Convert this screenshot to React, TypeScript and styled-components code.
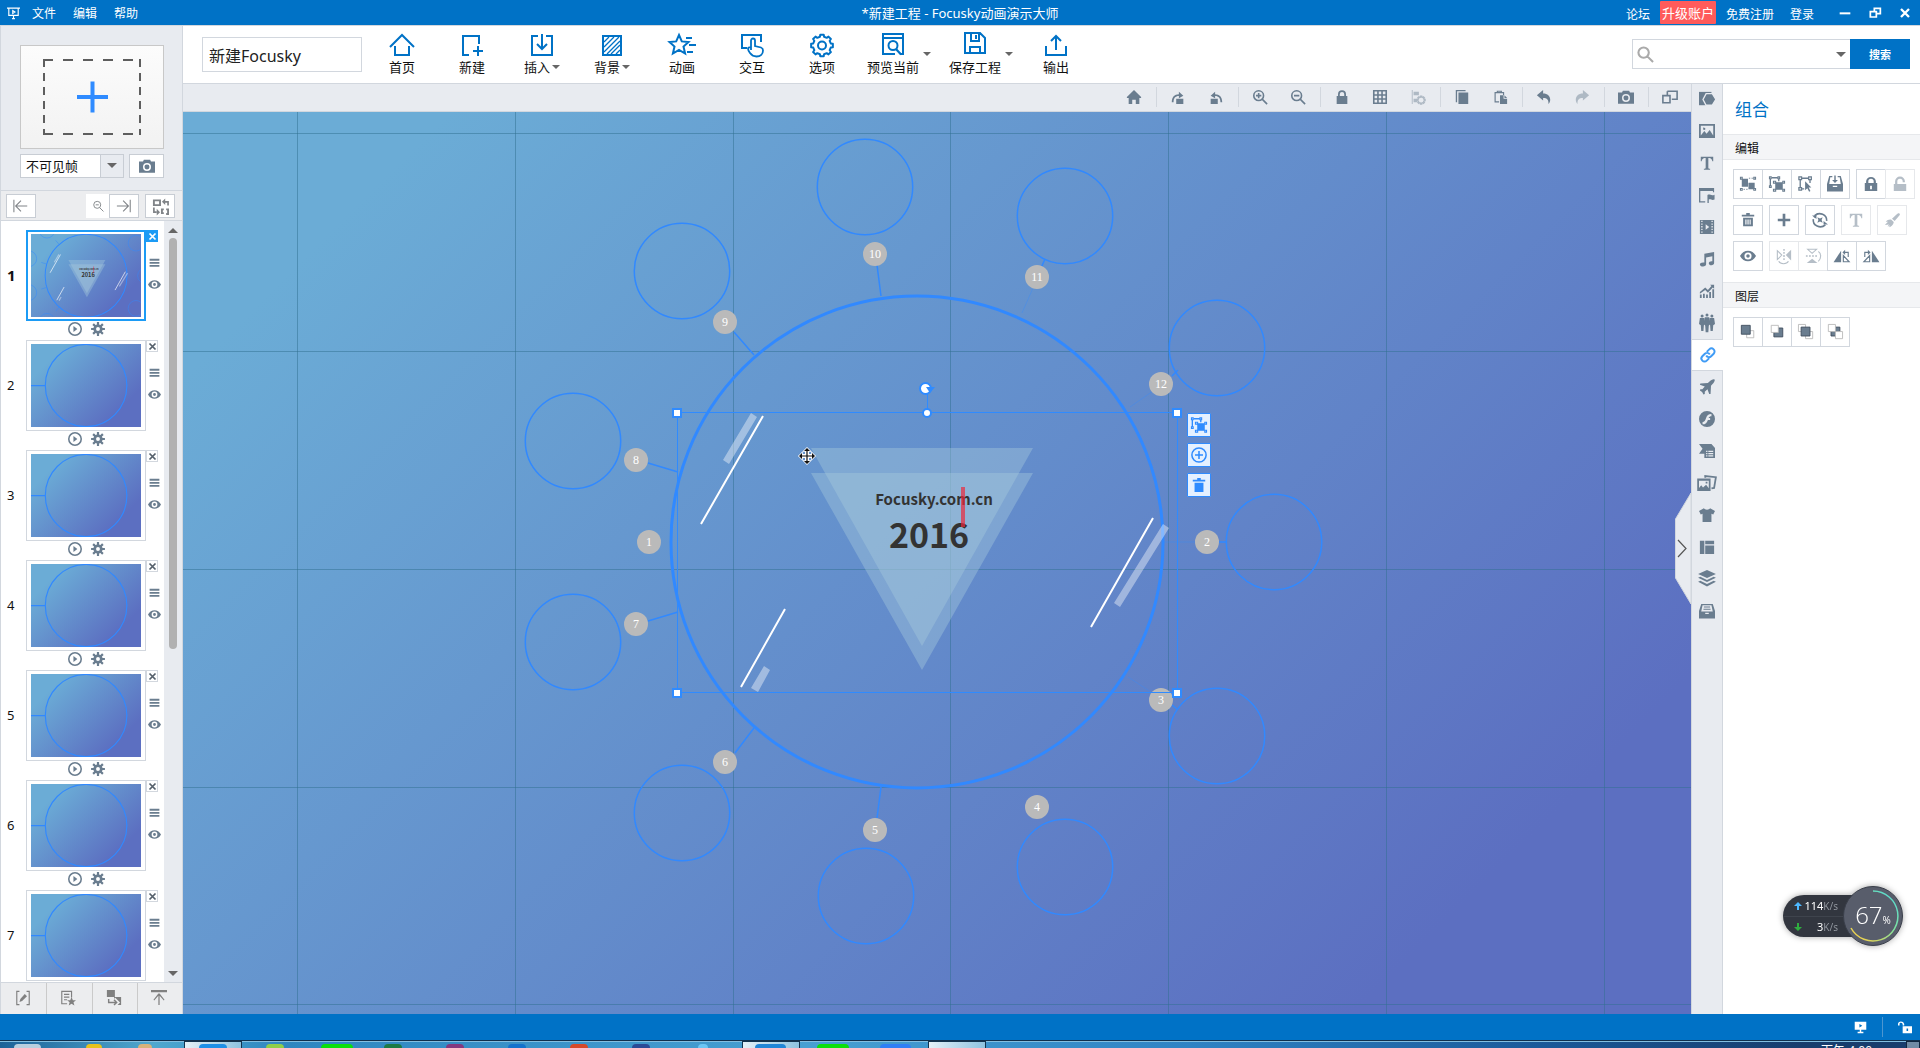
import React from "react";
import styled, { createGlobalStyle } from "styled-components";

const c = {
  blue: "#0072c6",
  line: "#d2d7de",
  panel: "#e8ebf0",
  slate: "#6a7d8f",
  accent: "#2f8bff",
};

const Global = createGlobalStyle`
  * { box-sizing: border-box; }
  body {
    margin: 0;
    font-family: "Noto Sans", "Noto Sans CJK SC", sans-serif;
    font-size: 12px;
    color: #111;
  }
  button { font: inherit; color: inherit; padding: 0; margin: 0; border: 0; background: none; cursor: pointer; }
  svg { display: block; flex: none; }
`;

/* ---------- icons ---------- */

const gear = (teeth: number, outer: number, inner: number, cx: number, cy: number) => {
  const pts: string[] = [];
  const step = (Math.PI * 2) / teeth;
  for (let i = 0; i < teeth; i++) {
    const a = i * step - Math.PI / 2;
    [[-0.3, inner], [-0.2, outer], [0.2, outer], [0.3, inner]].forEach(([k, r]) => {
      pts.push(`${(cx + Math.cos(a + k * step) * r).toFixed(2)} ${(cy + Math.sin(a + k * step) * r).toFixed(2)}`);
    });
  }
  return `M${pts.join("L")}Z`;
};

const line = { fill: "none", stroke: "currentColor" } as const;

/* Ribbon icons, drawn on a 26 unit square */
const ribbon: Record<string, React.ReactNode> = {
  home: <path {...line} strokeWidth="2" d="M1 15 13 3l12 12M6 14v9h14v-9" />,
  add: <path {...line} strokeWidth="2" d="M10 23H4V4h16v8M14 19h10M19 14v10" />,
  insert: <path {...line} strokeWidth="2" d="M9 4H3v19h20V4h-6M13 2v15M8 12l5 5 5-5" />,
  background: (
    <>
      <path {...line} strokeWidth="2" d="M4 4h18v19H4z" />
      <path {...line} strokeWidth="1.3" d="M5 10l5-5M5 15 15 5M5 20 20 5M8 22 21 9M12 22l9-9M17 22l4-4" />
    </>
  ),
  animate: (
    <path {...line} strokeWidth="2" d="M10 3l2.8 6.400 6.700.600-5 4.500 1.600 7L10 18l-6.100 3.500 1.600-7-5-4.500 6.700-.600zM17 6h6M20 13h7M18 20h6" />
  ),
  interact: (
    <>
      <path {...line} strokeWidth="2" d="M8 16H3V3h19v7" />
      <path {...line} strokeWidth="1.800" d="M12 18V8.500a2 2 0 0 1 4 0V14l6 1.500c1.500.500 2 1.500 2 3 0 3.500-2.500 6-6.500 6-3.500 0-5-1.500-6.500-3.500-1.500-2-2-3-2-4.500 0-1.200 1.800-1.500 3-.500" />
    </>
  ),
  options: (
    <>
      <path {...line} strokeWidth="2" strokeLinejoin="round" d={gear(8, 11, 9, 13, 13.500)} />
      <circle {...line} strokeWidth="2" cx="13" cy="13.500" r="4" />
    </>
  ),
  preview: (
    <>
      <path {...line} strokeWidth="2" d="M15 22H3V2h20v20h-3M3 6h20" />
      <circle {...line} strokeWidth="2" cx="13" cy="13.500" r="4.500" />
      <path {...line} strokeWidth="2.200" d="M16 17l5 5.500" />
    </>
  ),
  save: <path {...line} strokeWidth="2" d="M3 1h15l5 5v15H3zM9 1v8h8V1M14 3v4M8 21v-6h10v6" />,
  output: <path {...line} strokeWidth="2" d="M3 14v9h20v-9M13 18V4M8 9l5-5 5 5" />,
};

/* Tool icons, drawn on an 18 unit square */
const tools: Record<string, React.ReactNode> = {
  house: <path d="M9 1l8 8v1h-2v7h-4v-5H7v5H3v-7H1V9z" />,
  rotateRight: <path d="M7 11h8v6H7zM2 15c0-6 3-9 8-9V3l5 4.500-5 3V8c-4 0-6 2.500-6 7z" />,
  rotateLeft: <path d="M3 11h8v6H3zM16 15c0-6-3-9-8-9V3L3 7.500l5 3V8c4 0 6 2.500 6 7z" />,
  zoomIn: <path {...line} strokeWidth="1.800" d="M7.500 2a5.500 5.500 0 1 0 0 11 5.500 5.500 0 0 0 0-11zM12 12l5 5M4.500 7.500h6M7.500 4.500v6" />,
  zoomOut: <path {...line} strokeWidth="1.800" d="M7.500 2a5.500 5.500 0 1 0 0 11 5.500 5.500 0 0 0 0-11zM12 12l5 5M4.500 7.500h6" />,
  lock: (
    <path fillRule="evenodd" d="M3 8h1.500V6a4.500 4.500 0 0 1 9 0v2H15v9H3zM6.500 8h5V6a2.500 2.500 0 0 0-5 0z" />
  ),
  lockHole: (
    <path fillRule="evenodd" d="M2 8h1.500V6a5.500 5 0 0 1 11 0v2H16v9H2zM6 8h6V6a3 3 0 0 0-6 0zM8 11v4h2v-4z" />
  ),
  unlock: <path d="M2 9h14v8H2zM3.500 9V6a5 5 0 0 1 11 0v1h-2.500V6a3 3 0 0 0-6 0v3z" />,
  grid: <path {...line} strokeWidth="1.800" d="M2 2h14v14H2zM2 6.700h14M2 11.300h14M6.700 2v14M11.300 2v14" />,
  align: (
    <>
      <path d="M2 1h1v16H2zM4 3h6v4H4zM4 11h4v4H4z" />
      <path {...line} strokeWidth="1.500" d={gear(8, 4.500, 3.400, 12.500, 12.500)} />
    </>
  ),
  copy: <path d="M2 1h11v1.500H3.500V15H2zM5 4h11v13H5z" />,
  paste: (
    <>
      <path {...line} strokeWidth="1.300" d="M8 14.500H3.500V4H13v3M6 4V2.500h4.500V4" />
      <path d="M9 7h4v4h4v6H9zM14 7l3 3h-3z" />
    </>
  ),
  undo: <path d="M1 7l7-6v4c5 0 8 3 8 7 0 2-1 4-2 5 .5-5-1.500-7-6-7v3z" />,
  redo: <path d="M17 7l-7-6v4c-5 0-8 3-8 7 0 2 1 4 2 5-.5-5 1.500-7 6-7v3z" />,
  camera: (
    <path fillRule="evenodd" d="M0 4h4.500l1-2h7l1 2H18v12.500H0zM9 5.500a4.500 4.500 0 1 0 0 9 4.500 4.500 0 0 0 0-9zm0 1.700a2.800 2.800 0 1 1 0 5.600 2.800 2.800 0 0 1 0-5.600z" />
  ),
  windows: <path {...line} strokeWidth="1.800" d="M6 2.500h11v9h-6M6 2.500V7M1 7.500h8v8H1z" />,
  shape: (
    <>
      <path d="M0 1h14v15H0z" />
      <path stroke={c.panel} strokeWidth="1.500" d="M8 3h7l4 6.500-4 6.500H8L4.500 9.500z" />
    </>
  ),
  image: <path fillRule="evenodd" d="M0 1h18v16H0zM2 3v11l4-5 2.500 3L12 8l4 6V3zM4.500 5l2.500.5v2L5 8z" />,
  textT: <path d="M2 2h14v5h-1c-.5-2-1.500-3.500-3.500-3.500h-1V14c0 1.200.5 1.500 2 1.500v1H5.500v-1c1.500 0 2-.3 2-1.500V3.500h-1C4.500 3.500 3.500 5 3 7H2z" />,
  flagWindow: <path d="M0 1h17v5h-1.300V4.500H1.500V16H7v1.500H0zM9.500 9c3-1.500 4 1.500 8-.3V14c-3 1.500-4-.8-6.500 0v4H9.500z" />,
  film: (
    <path fillRule="evenodd" d="M1 1h16v16H1zM2.500 2v1.500H4V2zm0 3v1.500H4V5zm0 3v1.500H4V8zm0 3v1.500H4V11zm0 3v1.500H4V14zM14 2v1.500h1.500V2zm0 3v1.500h1.500V5zm0 3v1.500h1.500V8zm0 3v1.500h1.500V11zm0 3v1.500h1.500V14zM7.500 6v6l4-3z" />
  ),
  music: <path d="M6 3l11-2v12.500c0 1.500-1.300 2.500-3 2.500s-3-1-3-2.300c0-1.500 1.800-2.500 4-2.200V6L8 7.300V15c0 1.500-1.500 2.500-3.500 2.500S1 16.500 1 15.200c0-1.600 2-2.700 5-2.200z" />,
  chart: (
    <path d="M1 13h2v4H1zM4.500 12h2v5h-2zM8 13h2v4H8zM11.500 10h2v7h-2zM15 7h2v10h-2zM1 10l6-5 3 3 4-4.500-1.500-1.500H17v4.500l-1.500-1.500L10 11 7 8l-6 4z" />
  ),
  people: (
    <>
      <circle cx="3.500" cy="1" r="1.700" />
      <circle cx="9" cy="0" r="1.700" />
      <circle cx="14.500" cy="1" r="1.700" />
      <path d="M1 3.500h5l.5 7-1 1-.5 6.500H2.500L2 11.500 0 10zM6.500 2.500h5l.5 8-1 1.500-.5 7.500h-3L7 12l-1-1.500zM12 3.500h5l1 6.500-2 1.500-.5 6.500H13l-.5-6.500-1-1z" />
    </>
  ),
  link: (
    <g transform="rotate(-45 9 9)">
      <path {...line} strokeWidth="2.200" d="M7.500 12.500H3.500a3.500 3.500 0 0 1 0-7h4a3.500 3.500 0 0 1 3.300 4.500M10.500 5.500h4a3.500 3.500 0 0 1 0 7h-4a3.500 3.500 0 0 1-3.300-4.500" />
    </g>
  ),
  plane: <path d="M17.500.5c.8 1-.5 3.500-2.500 5.500l-1.500 1.500L13 17l-1.500 0-2-5.500-3 2.800V17l-1.500.5L3.500 14.500 1 13l.5-1.500h2.300l2.700-3L1 6.500 1.500 5l8.500-.500L11.500 3c2-2 5-3.500 6-2.500z" />,
  flash: (
    <path fillRule="evenodd" d="M9 0a9 9 0 1 1 0 18A9 9 0 0 1 9 0zm5 3.500c-3.500 0-5 1.500-6 4.500-1 3-2 4.500-4 4.500V15c3.500 0 5-2 6-5h2.500V7.800h-1.700c.6-1.300 1.500-2 3.200-2z" />
  ),
  template: (
    <>
      <path d="M0 1h14l4 4.500V17H6v-5H0l4-5.500z" />
      <path stroke={c.panel} strokeWidth="1.300" d="M8 9.500h1.500M10.500 9.500H16M8 12h1.500M10.500 12H16M8 14.500h1.500M10.500 14.500H16" />
    </>
  ),
  album: (
    <>
      <path fillRule="evenodd" d="M-2 4h15v14H-2zM0 6.500v8l2.500-3 2 2.500L8 11l3 4V6.500zM7.500 7.500h2v2h-2z" />
      <path {...line} strokeWidth="2" d="M7 3V1.200L19 2.500l-2 12-3 .5" />
    </>
  ),
  shirt: <path d="M5.500 1.500c1 2 6 2 7 0L18 4.500 16 8.500l-2-1V17H4V7.500l-2 1L0 4.500z" />,
  layout: <path d="M1 2h5v15H1zM7 2h10v4H7zM7 7.300h10V17H7z" />,
  stack: <path d="M9-1l10 4.500L9 8-1 3.500zM1.500 6.500L9 10l7.500-3.500L19 7.500 9 12.500-1 7.500zM1.500 11L9 14.500 16.500 11l2.500 1-10 5.500L-1 12z" />,
  drawer: (
    <path fillRule="evenodd" d="M2.500 1h13L18 9v8.500H0V9zM4 2.500L2.500 9.500h13L14 2.500zM5.500 4h7v1.200h-7zM5 6.500h8v1.200H5zM7 11v1.300h4V11z" />
  ),
  groupIn: (
    <>
      <path d="M2 3h7v9H2zM9.500 7.500h7V15h-7z" />
      <path {...line} strokeWidth="1.200" d="M.5 1.500h2v2h-2zM15.500 1.500h2v2h-2zM.5 14h2v2h-2zM15.500 14h2v2h-2z" />
      <path {...line} strokeWidth="1" strokeDasharray="1.500 1.500" d="M10 2.500h5M4 15h5" />
    </>
  ),
  group: (
    <>
      <path d="M7 7h8.500v8.500H7z" />
      <path {...line} strokeWidth="1.500" d="M3 2h7M1.500 3.500v8M11 3.500V6" />
      <path {...line} strokeWidth="1.200" d="M.5 1h2v2h-2zM10 1h2v2h-2zM.5 11h2v2h-2zM5 6h2.500v2H5zM15.500 6h2v2h-2zM5 15h2.500v2H5zM15.500 15h2v2h-2z" />
    </>
  ),
  pick: (
    <>
      <path {...line} strokeWidth="1.500" d="M4 2.500h8M2.500 4v9M13.500 4v4M4 14.500h3" />
      <path {...line} strokeWidth="1.400" d="M1 1h3v3H1zM12 1h3v3h-3zM1 13h3v3H1z" />
      <path d="M8 6l7 7h-3l2 4-1.500.8-2-4L8 16z" />
    </>
  ),
  import: (
    <path fillRule="evenodd" d="M2.500 0H6v1.500H3.700L2.500 9h13l-1.200-7.500H12V0h3.500L18 9v8.500H0V9zM8.200-.5h1.600v5h2.500L9 8 5.700 4.500h2.500zM6.500 11v1.300h5V11z" />
  ),
  trash: <path fillRule="evenodd" d="M7 1h4v2h5v2H2V3h5zM3.500 6.500h11V16h-11zM6 8.500V14h1.300V8.500zm2.400 0V14h1.300V8.500zm2.400 0V14H12V8.500z" />,
  bin: <path d="M7 1h4v2h5v2H2V3h5zM4 6.500h10V17H4z" />,
  plus: <path d="M7.500 2h3v5.500H16v3h-5.500V16h-3v-5.500H2v-3h5.500z" />,
  spin: (
    <>
      <path {...line} strokeWidth="1.800" d="M3 4a8 7.500 0 0 1 13.500 6M15 14.500A8 7.500 0 0 1 1.500 8M6.500 2a8 8 0 0 0-4 4" />
      <path d="M0 4h5v4zM18 14h-5v-4zM6 6l3 1.200L12 6l-1.200 3 1.200 3-3-1.200L6 12l1.200-3z" />
    </>
  ),
  brush: <path d="M17 1l1 2-6 7-3-2.500L15 2zM8 8.500l3 2.700c-.3 3-3 5.500-5.500 6L7 15l-3 1.500L5.500 14 1 14.500 4.500 11 2 11c1.500-2 4-3 6-2.500z" />,
  eye: (
    <path fillRule="evenodd" d="M0 9c4-8 14-8 18 0-4 8-14 8-18 0zm9-4a4 4 0 1 0 0 8 4 4 0 0 0 0-8zm0 2a2 2 0 1 1 0 4 2 2 0 0 1 0-4z" />
  ),
  flipH: (
    <>
      <path d="M17 2v12l-6-6z" />
      <path {...line} strokeWidth="1.200" d="M1.500 3v10l5-5zM3 15c2 3.500 9 3.500 11 0" />
      <path {...line} strokeWidth="1.600" strokeDasharray="2 1.500" d="M9 1v13" />
    </>
  ),
  flipV: (
    <>
      <path d="M2 17h12l-6-5z" />
      <path {...line} strokeWidth="1.200" d="M3 1.500h10L8 6zM15 4c3.500 2 3.500 8 0 11" />
      <path {...line} strokeWidth="1.600" strokeDasharray="2 1.500" d="M1 9h13" />
    </>
  ),
  mirrorL: (
    <>
      <path d="M8 3v13H-.5z" />
      <path {...line} strokeWidth="1.300" d="M10.500 8.500v7H17zM16 10V5h-5" />
      <path d="M12.500 2v6L9.500 5z" />
    </>
  ),
  mirrorR: (
    <>
      <path d="M10 3v13h8.500z" />
      <path {...line} strokeWidth="1.300" d="M7.500 8.500v7H1zM2 10V5h5" />
      <path d="M5.500 2v6l3-3z" />
    </>
  ),
  front: (
    <>
      <path {...line} stroke="#b9b9b9" d="M7.500 7.500h8v8h-8z" />
      <path stroke="#3f4d5c" d="M1.500 1.500h10v10h-10z" />
    </>
  ),
  back: (
    <>
      <path stroke="#3f4d5c" d="M5.500 4.500h10v10h-10z" />
      <path fill="#fff" stroke="#b9b9b9" d="M2.500 1.500h8v8h-8z" />
    </>
  ),
  forward: (
    <>
      <path {...line} stroke="#b9b9b9" d="M.5.5h8v8h-8zM8.500 8.500h8v8h-8z" />
      <path stroke="#3f4d5c" d="M3.500 3.500h10v10h-10z" />
    </>
  ),
  backward: (
    <>
      <path stroke="#3f4d5c" d="M4.500 3.500h10v10h-10z" />
      <path fill="#fff" stroke="#b9b9b9" d="M1.500.5h8v8h-8zM9.500 8.500h8v8h-8z" />
    </>
  ),
  first: <path {...line} strokeWidth="1.200" d="M1 2v14M16 9H3M9 3L3 9l6 6" />,
  last: <path {...line} strokeWidth="1.200" d="M16 2v14M1 9h13M8 3l6 6-6 6" />,
  lens: <path {...line} strokeWidth="1.200" d="M8 3a4.500 4.500 0 1 0 0 9 4.500 4.500 0 0 0 0-9zM11.300 11.300L16 16M6 7.500h4" />,
  swap: (
    <>
      <path {...line} strokeWidth="2" d="M2 2.500h6.500v5H2zM10.500 17v-5h2M10.500 16h2M15 12h2v5h-2" />
      <path {...line} strokeWidth="1.800" d="M17 8V4h-4M2 10v5h3" />
      <path d="M14 .5v7L10.500 4zM5 11.500v7l3.500-3.500z" />
    </>
  ),
  play: (
    <>
      <circle {...line} strokeWidth="2" cx="9" cy="9" r="8" />
      <path d="M7 5l5 4-5 4z" />
    </>
  ),
  cog: <path fillRule="evenodd" d={`${gear(8, 9, 6, 9, 9)}M9 6.500a2.500 2.500 0 1 0 0 5 2.500 2.500 0 0 0 0-5z`} />,
  menu: <path d="M1 3h16v3H1zM1 8h16v3H1zM1 13h16v3H1z" />,
  cross: <path {...line} strokeWidth="3.500" d="M3 3l12 12M15 3L3 15" />,
  edit: (
    <>
      <path {...line} strokeWidth="1.300" d="M5 1.500H2v15h3M13 1.500h3v15h-3" />
      <path d="M11 4.500l2.500 2.500L8 12.500l-3 1L6 10z" />
    </>
  ),
  noteStar: (
    <>
      <path {...line} strokeWidth="1.300" d="M8 15.500H2v-14h11v7M4.500 5h6M4.500 8h6M4.500 11H8" />
      <path d="M13 8l1.500 3.500h3.500l-2.800 2.300 1 3.700-3.200-2-3.200 2 1-3.700L8 11.500h3.500z" />
    </>
  ),
  convert: (
    <>
      <path d="M1 0h9v8H1zM9 8h8v9h-7z" />
      <path fill="none" stroke="#ecedef" strokeWidth="4" d="M3 9v5h8M9 10l4 4-4 4" />
      <path {...line} strokeWidth="1.600" d="M3 10v4h8M9 11l3 3-3 3" />
    </>
  ),
  toTop: <path d="M0 0h18v2.500H0zM8.300 4h1.400l5.500 7-.8.800L9.700 6.500V17H8.300V6.500l-4.700 5.300-.8-.8z" />,
  monitor: <path fillRule="evenodd" d="M1 1h16v11h-7v3h3v2H5v-2h3v-3H1zM7.500 4v5l4-2.500z" />,
  openLock: <path fillRule="evenodd" d="M6 8h12v9H6zM11 11v3h2v-3zM0 7V5c0-4 7-4.500 8 0v2H6V5C5 3 2 3.500 2 5v2z" />,
  circlePlus: <path {...line} strokeWidth="1.700" d="M9 1a8 8 0 1 0 0 16A8 8 0 0 0 9 1zM4.500 9h9M9 4.500v9" />,
  search: <path {...line} strokeWidth="2.200" d="M7 1.500a5.500 5.500 0 1 0 0 11 5.500 5.500 0 0 0 0-11zM11 11l6 6" />,
  present: <path {...line} strokeWidth="1.600" d="M0 1.500h18M2.500 2v9.500h13V2M9 12v5M7 16h4M8 5v4l3-2z" />,
  minimize: <path d="M1 8h16v3H1z" />,
  restore: <path {...line} strokeWidth="2.600" d="M8 7V2h9v8h-5M2 7h9v8H2z" />,
};

const Icon = ({ name, size = 18 }: { name: string; size?: number }) => (
  <svg width={size} height={size} viewBox="0 0 18 18" fill="currentColor" overflow="visible" aria-hidden="true">
    {tools[name]}
  </svg>
);

const Caret = styled.i<{ $size?: number }>`
  width: 0;
  height: 0;
  border: solid transparent;
  border-width: ${(p) => `${p.$size ?? 4}px ${p.$size ?? 4}px 0`};
  border-top-color: #666;
`;

/* ---------- shell ---------- */

const Shell = styled.div`
  display: flex;
  flex-direction: column;
  height: 100vh;
  overflow: hidden;
  background: #fff;
`;

const TitleBar = styled.header`
  display: grid;
  grid-template-columns: 1fr auto 1fr;
  align-items: center;
  height: 26px;
  border-bottom: 1px solid ${c.line};
  background: ${c.blue};
  color: #fff;
`;
const Menu = styled.nav`
  display: flex;
  align-items: center;
  gap: 17px;
  padding: 2px 0 0 7px;
`;
const MenuButton = styled.button`
  line-height: 20px;
`;
const AppMark = styled.span`
  width: 8px;
  color: #fff;
`;
const Title = styled.h1`
  margin: 0;
  font-size: 13px;
  line-height: 20px;
  font-weight: 400;
`;
const Account = styled.div`
  display: flex;
  justify-content: flex-end;
  align-items: center;
`;
const AccountLink = styled.a`
  padding: 2px 10px 0 0;
  color: #fff;
  text-decoration: none;
`;
const Upgrade = styled.button`
  width: 56px;
  height: 23px;
  margin-right: 10px;
  border-radius: 1px;
  background: #ff5b5b;
  font-size: 13px;
  line-height: 22px;
`;
const WindowButton = styled.button`
  display: grid;
  place-items: center;
  width: 30px;
  height: 24px;
`;
const Gap = styled.span`
  width: 6px;
`;

const Body = styled.div`
  display: flex;
  flex: 1;
  min-height: 0;
`;
const Main = styled.div`
  display: flex;
  flex-direction: column;
  flex: 1;
  min-width: 0;
`;

/* ---------- ribbon ---------- */

const Ribbon = styled.div`
  display: flex;
  align-items: flex-start;
  height: 58px;
  padding-left: 19px;
  border-bottom: 1px solid ${c.line};
`;
const NameInput = styled.input`
  width: 160px;
  height: 35px;
  margin: 11px 5px 0 0;
  padding: 0 6px;
  border: 1px solid ${c.line};
  font: 16px "Noto Sans", "Noto Sans CJK SC", sans-serif;
  color: #222;
`;
const RibbonButton = styled.button<{ $drop: boolean }>`
  display: flex;
  flex-direction: column;
  align-items: center;
  width: ${(p) => (p.$drop ? 60 : 70)}px;
  margin-left: ${(p) => (p.$drop ? 6 : 0)}px;
  padding-top: 6px;
  font-size: 13px;
  line-height: 18px;
  svg { color: ${c.blue}; }
`;
const RibbonLabel = styled.span`
  display: flex;
  align-items: center;
  gap: 2px;
`;
const DropButton = styled.button`
  display: grid;
  place-items: center;
  width: 8px;
  height: 56px;
  margin-right: 8px;
`;
const Search = styled.form`
  display: flex;
  margin: 13px 10px 0 auto;
`;
const SearchBox = styled.label`
  display: flex;
  align-items: center;
  width: 218px;
  height: 30px;
  padding: 0 4px;
  border: 1px solid ${c.line};
  border-right: 0;
  color: #aaa;
`;
const SearchInput = styled.input`
  flex: 1;
  min-width: 0;
  border: 0;
  outline: 0;
  font: inherit;
`;
const SearchButton = styled.button`
  width: 60px;
  height: 30px;
  background: ${c.blue};
  color: #fff;
  font-size: 11px;
  font-weight: 700;
`;

/* ---------- frame list ---------- */

const Frames = styled.aside`
  display: flex;
  flex-direction: column;
  width: 183px;
  border: solid ${c.line};
  border-width: 0 1px;
  background: ${c.panel};
`;
const FrameAdd = styled.button`
  display: grid;
  place-items: center;
  width: 144px;
  height: 104px;
  margin: 19px 0 0 19px;
  border: 1px solid #c8c8c8;
  background: linear-gradient(#fcfcfc, #f2f2f2);
`;
const FrameKind = styled.div`
  display: flex;
  gap: 5px;
  height: 24px;
  margin: 5px 0 12px 19px;
`;
const KindBox = styled.div`
  position: relative;
  width: 104px;
  i { position: absolute; right: 7px; top: 9px; pointer-events: none; }
`;
const KindSelect = styled.select`
  appearance: none;
  width: 104px;
  height: 24px;
  padding: 0 0 2px 5px;
  border: 1px solid #c8cdd4;
  border-radius: 0;
  background: linear-gradient(to right, #fff 79px, #c8cdd4 79px, #c8cdd4 80px, ${c.panel} 80px);
  font: 13px "Noto Sans CJK SC", sans-serif;
  color: #111;
`;
const SmallBox = styled.button<{ $width: number; $plain?: boolean }>`
  display: grid;
  place-items: center;
  width: ${(p) => p.$width}px;
  height: 100%;
  border: 1px solid ${(p) => (p.$plain ? "transparent" : "#c8cdd4")};
  background: #fff;
  color: ${c.slate};
`;
const FrameNav = styled.div`
  display: flex;
  height: 31px;
  padding: 3px 0 2px 5px;
  border: solid ${c.line};
  border-width: 1px 0;
  background: #ecedef;
  button { color: #808488; }
`;
const NavSpace = styled.span<{ $width: number }>`
  width: ${(p) => p.$width}px;
`;
const FrameArea = styled.div`
  display: flex;
  flex: 1;
  min-height: 0;
`;
const FrameItems = styled.ol`
  flex: 1;
  margin: 0;
  padding: 9px 0 0;
  overflow: hidden;
  background: #fff;
  list-style: none;
`;
const FrameItem = styled.li`
  display: grid;
  grid-template-columns: 25px 120px 16px;
  grid-template-rows: 91px 19px;
`;
const FrameNumber = styled.span<{ $active: boolean }>`
  align-self: center;
  padding: 0 0 2px 6px;
  font-size: ${(p) => (p.$active ? 15 : 13)}px;
  font-weight: ${(p) => (p.$active ? 700 : 400)};
`;
const Thumb = styled.div<{ $active: boolean }>`
  padding: ${(p) => (p.$active ? "2px 3px" : "3px 4px")};
  border: ${(p) => (p.$active ? `2px solid #1c9bf5` : `1px solid ${c.line}`)};
  svg { width: 100%; height: 100%; background: linear-gradient(135deg, #6bacd6 18%, #5c6fc1 80%); }
`;
const FrameSide = styled.div`
  display: flex;
  flex-direction: column;
  align-items: center;
  color: ${c.slate};
`;
const CloseButton = styled.button<{ $active: boolean }>`
  display: grid;
  place-items: center;
  align-self: flex-start;
  width: 12px;
  height: 12px;
  margin-bottom: 14px;
  border: 1px solid ${(p) => (p.$active ? "#1c9bf5" : c.line)};
  background: ${(p) => (p.$active ? "#1c9bf5" : "#fff")};
  color: ${(p) => (p.$active ? "#fff" : "#55606b")};
`;
const SideButton = styled.button`
  margin: 1px 0 9px;
`;
const FrameTools = styled.div`
  display: flex;
  grid-column: 2;
  justify-content: center;
  align-items: flex-start;
  gap: 9px;
  padding-top: 1px;
  color: ${c.slate};
`;
const ScrollTrack = styled.div`
  display: flex;
  flex-direction: column;
  align-items: center;
  width: 18px;
  padding: 7px 0 6px;
`;
const ScrollThumb = styled.div`
  flex: 0 1 55%;
  width: 8px;
  margin: 5px 0 auto;
  border-radius: 4px;
  background: #b1b1b1;
`;
const ScrollArrow = styled(Caret)<{ $up?: boolean }>`
  transform: ${(p) => (p.$up ? "rotate(180deg)" : "none")};
`;
const FrameFoot = styled.div`
  display: grid;
  grid-template-columns: repeat(4, 1fr);
  height: 32px;
  border-top: 1px solid ${c.line};
  background: #ecedef;
  color: #808080;
`;
const FootButton = styled.button`
  display: grid;
  place-items: center;
  padding: 0 2px 1px 0;
  & + & { border-left: 1px solid #cacaca; }
`;

/* ---------- workspace ---------- */

const Workspace = styled.div`
  display: flex;
  flex: 1;
  min-height: 0;
`;
const Editor = styled.main`
  position: relative;
  display: flex;
  flex-direction: column;
  flex: 1;
  min-width: 0;
`;
const EditBar = styled.div`
  display: flex;
  justify-content: flex-end;
  align-items: center;
  height: 28px;
  padding: 0 2px 2px 0;
  border-bottom: 1px solid ${c.line};
  background: ${c.panel};
  color: ${c.slate};
`;
const BarButton = styled.button<{ $off?: boolean }>`
  display: grid;
  place-items: center;
  width: 38px;
  height: 26px;
  opacity: ${(p) => (p.$off ? 0.45 : 1)};
`;
const BarRule = styled.span`
  width: 1px;
  height: 20px;
  margin: 0 2px 0 3px;
  background: ${c.line};
`;
const Canvas = styled.div`
  position: relative;
  flex: 1;
  min-height: 0;
  overflow: hidden;
  background: linear-gradient(135deg, #6bacd6 11%, #5c6fc1 86%);
  > svg { width: 100%; height: 100%; }
`;
const FloatTools = styled.div`
  position: absolute;
  left: 1004px;
  top: 301px;
  display: grid;
  gap: 6px;
`;
const FloatButton = styled.button`
  display: grid;
  place-items: center;
  width: 24px;
  height: 24px;
  border: 1px solid ${c.accent};
  border-radius: 1px;
  background: #e5f0ff;
  color: ${c.accent};
`;
const PanelToggle = styled.button`
  position: absolute;
  right: 0;
  top: 409px;
  color: #555;
`;

const Strip = styled.nav`
  width: 32px;
  border: solid ${c.line};
  border-width: 0 1px;
  background: ${c.panel};
`;
const StripButton = styled.button<{ $active: boolean }>`
  display: grid;
  place-items: center;
  width: ${(p) => (p.$active ? 31 : 30)}px;
  height: 32px;
  padding-bottom: 1px;
  border: solid ${(p) => (p.$active ? c.line : "transparent")};
  border-width: 1px 0;
  background: ${(p) => (p.$active ? "#fff" : "transparent")};
  color: ${(p) => (p.$active ? "#3f9bf5" : c.slate)};
  &:first-child { height: 31px; }
`;

const Panel = styled.aside`
  width: 197px;
`;
const PanelTitle = styled.h2`
  margin: 0;
  padding: 13px 12px 11px;
  font-size: 17px;
  line-height: 26px;
  font-weight: 400;
  color: ${c.blue};
`;
const SectionTitle = styled.h3`
  margin: 0;
  padding: 2px 12px 0;
  height: 26px;
  border: solid #e6e8eb;
  border-width: 1px 0;
  background: #f4f5f7;
  font-size: 12px;
  line-height: 24px;
  font-weight: 400;
`;
const ToolRows = styled.div`
  display: grid;
  gap: 6px;
  padding: 9px 0 11px 10px;
`;
const ToolRow = styled.div`
  display: flex;
  gap: 6px;
`;
const ToolGroup = styled.div`
  display: flex;
`;
const ToolButton = styled.button<{ $off: boolean }>`
  display: grid;
  place-items: center;
  width: 30px;
  height: 30px;
  border: 1px solid ${(p) => (p.$off ? "#e6e8eb" : c.line)};
  color: ${(p) => (p.$off ? "#b5bec7" : c.slate)};
  & + & { margin-left: -1px; }
`;

const StatusBar = styled.footer`
  display: flex;
  justify-content: flex-end;
  align-items: center;
  height: 26px;
  padding-right: 8px;
  background: ${c.blue};
  color: #fff;
`;
const StatusButton = styled.button`
  padding: 0 15px;
  & + & { padding-right: 0; border-left: 1px solid #4d96d0; height: 20px; }
`;

/* ---------- desktop task bar ---------- */

const TaskBar = styled.div`
  position: relative;
  height: 8px;
  overflow: hidden;
  border-top: 1px solid #10304d;
  background: linear-gradient(to right, #1d6298, #4fa8cf 8%, #2e86c0 15%, #47a0d2 42%, #2f83c4 62%, #1a5a9a 80%, #173d6d 94%);
  box-shadow: inset 0 1px #84bfe0;
`;
const TaskSlot = styled.span<{ $x: number }>`
  position: absolute;
  left: ${(p) => p.$x}px;
  top: 0;
  width: 58px;
  height: 8px;
  border: 1px solid #12344f;
  background: linear-gradient(to right, #e4f1f8, #8ec3e0);
`;
const TaskMark = styled.span<{ $x: number; $w: number; $color: string }>`
  position: absolute;
  left: ${(p) => p.$x}px;
  top: 3px;
  width: ${(p) => p.$w}px;
  height: 8px;
  border-radius: 4px 4px 0 0;
  background: ${(p) => p.$color};
`;
const Clock = styled.time`
  position: absolute;
  right: 48px;
  top: 2px;
  color: #fff;
  font-size: 12px;
  line-height: 16px;
`;
const ShowDesktop = styled.span`
  position: absolute;
  right: 0;
  top: 0;
  width: 14px;
  height: 8px;
  border: 1px solid #0f2740;
  background: #6f8ba5;
`;

/* ---------- speed widget ---------- */

const Meter = styled.div`
  position: fixed;
  right: 17px;
  bottom: 102px;
  display: flex;
  align-items: center;
  filter: drop-shadow(0 0 3px rgba(0, 0, 0, 0.35));
`;
const Speeds = styled.div`
  width: 80px;
  margin-right: -20px;
  border-radius: 21px 0 0 21px;
  background: #32363f;
  color: #fff;
`;
const Speed = styled.div`
  display: flex;
  align-items: center;
  justify-content: flex-end;
  height: 21px;
  padding-right: 25px;
  font-size: 11px;
  line-height: 20px;
  & + & { border-top: 1px solid #3f444d; }
  svg { margin: 0 auto 0 11px; }
`;
const Unit = styled.span`
  color: #8f949c;
  font-size: 10px;
`;
const Dial = styled.div`
  position: relative;
  display: flex;
  align-items: baseline;
  justify-content: center;
  width: 60px;
  height: 60px;
  border: 1px solid #3a3f4a;
  border-radius: 50%;
  background: #585d6b;
  color: #fff;
  font-size: 24px;
  font-weight: 300;
  line-height: 56px;
  font-family: "Open Sans", "Noto Sans", sans-serif;
  small { font-size: 10px; font-weight: 400; }
  svg { position: absolute; left: 0; top: 0; }
`;

/* ---------- scene ---------- */

const Artwork = ({ thin = 1 }: { thin?: number }) => (
  <>
    <circle cx="917" cy="542" r="246" fill="none" stroke="#3189ff" strokeWidth={3 * thin} />
    <path d="M811 448h222L922 646z" fill="rgba(168,202,221,.4)" />
    <path d="M811 473h222L922 670z" fill="rgba(168,202,221,.4)" />
    <g stroke="#fff" strokeWidth={2 * thin} fill="none">
      <path d="M763 416L701 524M785 609l-44 78M1153 518l-62 109" />
    </g>
    <g fill="#fff" fillOpacity=".4">
      <path d="M751 413l6 4-28 47-6-4zM764 666l6 4-12 22-7-4zM1163 524l6 4-49 79-6-4z" />
    </g>
    <g fill="#333" fontWeight="700" textAnchor="middle" fontFamily='"Noto Sans CJK SC", sans-serif'>
      <text x="934" y="505" fontSize="15">Focusky.com.cn</text>
      <text x="929" y="548" fontSize="34">2016</text>
    </g>
    <path d="M961 487h4v40h-4z" fill="rgba(235,40,60,.7)" />
  </>
);

const bubbles = [
  [865, 187], [1065, 216], [1217, 348], [1274, 542], [1217, 736], [1065, 867],
  [866, 896], [682, 813], [573, 642], [573, 441], [682, 271],
];
const badges = [
  [649, 542], [1207, 542], [1161, 700], [1037, 807], [875, 830], [725, 762],
  [636, 624], [636, 460], [725, 322], [875, 254], [1037, 277], [1161, 384],
];

const Scene = () => (
  <svg aria-label="画布">
    <g transform="translate(-183 -112)">
      <path
        fill="none"
        stroke="#2f6f8f"
        strokeOpacity=".5"
        d="M297.500 112v902M515.500 112v902M733.500 112v902M950.500 112v902M1168.500 112v902M1386.500 112v902M1604.500 112v902M183 133.500h1508M183 351.500h1508M183 569.500h1508M183 787.500h1508M183 1004.500h1508"
      />
      <g fill="none" stroke="#3189ff" strokeWidth="1.500">
        {bubbles.map(([x, y]) => (
          <circle key={`${x}-${y}`} cx={x} cy={y} r="47.700" />
        ))}
        <path d="M877 265l4 31M734 332l20 23M648 463l30 9M648 621l30-9M735 753l19-25M877 818l4-31M1219 542h8M1172 705l6 5M1041 268l4-9M1172 376l6-6" />
        <path strokeOpacity=".35" strokeWidth="1" d="M1153 391l-23 16M1033 288l-11 25M1163 542h33M1128 677l23 15" />
      </g>
      <Artwork />
      {badges.map(([x, y], i) => (
        <g key={i}>
          <circle cx={x} cy={y} r="12" fill="#bababa" />
          <text x={x} y={y + 4} textAnchor="middle" fill="#fff" fontSize="12" fontFamily='"Liberation Serif", serif'>
            {i + 1}
          </text>
        </g>
      ))}
      <path fill="none" stroke={c.accent} d="M677.500 412.500h500v280h-500zM927.500 389v20" />
      <g fill="#fff" stroke={c.accent} strokeWidth="2">
        <path d="M673 409h8v8h-8zM1173 409h8v8h-8zM673 689h8v8h-8zM1173 689h8v8h-8z" />
        <circle cx="927" cy="413" r="4" />
        <circle cx="925.500" cy="388.500" r="5.500" />
      </g>
      <path fill={c.accent} d="M926 387h9l-5 6z" />
      <g transform="translate(807 456)">
        <path stroke="#fff" strokeWidth="4" strokeLinejoin="round" fill="#fff" d="M0-6v12M-6 0H6" />
        <path
          fill="#111"
          stroke="#fff"
          paintOrder="stroke"
          strokeWidth="1.500"
          d="M0-8l3 3H.6v4.400H5V-3l3 3-3 3V.6H.6V5H3L0 8l-3-3h2.400V.6H-5V3l-3-3 3-3v2.400h4.400V-5H-3z"
        />
      </g>
    </g>
  </svg>
);

const ribbonItems = [
  { icon: "home", label: "首页" },
  { icon: "add", label: "新建" },
  { icon: "insert", label: "插入", caret: true },
  { icon: "background", label: "背景", caret: true },
  { icon: "animate", label: "动画" },
  { icon: "interact", label: "交互" },
  { icon: "options", label: "选项" },
  { icon: "preview", label: "预览当前", drop: true },
  { icon: "save", label: "保存工程", drop: true },
  { icon: "output", label: "输出" },
];

const barGroups = [
  ["house"],
  ["rotateRight", "rotateLeft"],
  ["zoomIn", "zoomOut"],
  ["lock", "grid", "-align"],
  ["copy", "paste"],
  ["undo", "-redo"],
  ["camera"],
  ["windows"],
];

const stripIcons = [
  "shape", "image", "textT", "flagWindow", "film", "music", "chart", "people", "link",
  "plane", "flash", "template", "album", "shirt", "layout", "stack", "drawer",
];

const editRows = [
  [["groupIn", "group", "pick", "import"], ["lockHole", "-unlock"]],
  [["trash"], ["plus"], ["spin"], ["-textT"], ["-brush"]],
  [["eye"], ["-flipH", "-flipV", "mirrorL", "mirrorR"]],
];
const layerRows = [[["front", "back", "forward", "backward"]]];

const ToolGrid = ({ rows }: { rows: string[][][] }) => (
  <ToolRows>
    {rows.map((row, r) => (
      <ToolRow key={r}>
        {row.map((names) => (
          <ToolGroup key={names[0]}>
            {names.map((n) => (
              <ToolButton key={n} $off={n[0] === "-"} aria-label={n.replace("-", "")}>
                <Icon name={n.replace("-", "")} size={16} />
              </ToolButton>
            ))}
          </ToolGroup>
        ))}
      </ToolRow>
    ))}
  </ToolRows>
);

const marks: [number, number, string][] = [
  [14, 27, "#b9cfdf"], [86, 16, "#e8c21c"], [138, 14, "#d9b27a"], [266, 18, "#8fcf4a"],
  [321, 32, "#0be00b"], [384, 18, "#1c7a45"], [446, 18, "#84397f"], [508, 18, "#1372cc"],
  [570, 18, "#d6492a"], [632, 18, "#2a4a96"], [698, 10, "#6cc6f5"], [817, 32, "#0be00b"], [880, 31, "#2f7ff5"],
];

export default function App() {
  return (
    <Shell>
      <Global />
      <TitleBar>
        <Menu>
          <AppMark><Icon name="present" size={13} /></AppMark>
          <MenuButton>文件</MenuButton>
          <MenuButton>编辑</MenuButton>
          <MenuButton>帮助</MenuButton>
        </Menu>
        <Title>*新建工程 - Focusky动画演示大师</Title>
        <Account>
          <AccountLink href="#forum">论坛</AccountLink>
          <Upgrade>升级账户</Upgrade>
          <AccountLink href="#register">免费注册</AccountLink>
          <Gap />
          <AccountLink href="#login">登录</AccountLink>
          <Gap />
          <WindowButton aria-label="最小化"><Icon name="minimize" size={12} /></WindowButton>
          <WindowButton aria-label="还原"><Icon name="restore" size={12} /></WindowButton>
          <WindowButton aria-label="关闭"><Icon name="cross" size={12} /></WindowButton>
        </Account>
      </TitleBar>

      <Body>
        <Frames>
          <FrameAdd aria-label="添加帧">
            <svg width="98" height="76" viewBox="0 0 98 76">
              <path fill="none" stroke="#5e5e5e" strokeWidth="2" strokeDasharray="10 10" strokeDashoffset="2" d="M2 1h94M2 75h94" />
              <path fill="none" stroke="#5e5e5e" strokeWidth="2" strokeDasharray="8 6" d="M1 0v76M97 0v76" />
              <path stroke={c.accent} strokeWidth="4" d="M34 38h31M49.500 22.500v31" />
            </svg>
          </FrameAdd>
          <FrameKind>
            <KindBox>
              <KindSelect aria-label="帧类型" defaultValue="0"><option value="0">不可见帧</option></KindSelect>
              <Caret $size={5} />
            </KindBox>
            <SmallBox $width={35} aria-label="截图"><Icon name="camera" size={16} /></SmallBox>
          </FrameKind>
          <FrameNav>
            <SmallBox $width={30} aria-label="第一帧"><Icon name="first" size={16} /></SmallBox>
            <NavSpace $width={50} />
            <SmallBox $width={23} $plain aria-label="查找"><Icon name="lens" size={14} /></SmallBox>
            <SmallBox $width={30} aria-label="最后一帧"><Icon name="last" size={16} /></SmallBox>
            <NavSpace $width={6} />
            <SmallBox $width={30} aria-label="切换"><Icon name="swap" size={17} /></SmallBox>
          </FrameNav>
          <FrameArea>
            <FrameItems>
              {[1, 2, 3, 4, 5, 6, 7].map((n) => (
                <FrameItem key={n}>
                  <FrameNumber $active={n === 1}>{n}</FrameNumber>
                  <Thumb $active={n === 1}>
                    <svg viewBox="586 294 661 493" preserveAspectRatio="none" aria-hidden="true">
                      {n === 1 ? (
                        <>
                          <g fill="none" stroke="#3189ff" strokeOpacity=".7" strokeWidth="4">
                            {bubbles.map(([x, y]) => <circle key={`${x}-${y}`} cx={x} cy={y} r="47" />)}
                            <path d="M734 332l20 23M648 463l30 9M648 621l30-9M735 753l19-25" />
                          </g>
                          <Artwork thin={2} />
                        </>
                      ) : (
                        <path fill="none" stroke="#3189ff" strokeWidth="7" d="M586 541h86M672 541a244 243 0 1 1 490 0 244 243 0 1 1-490 0" />
                      )}
                    </svg>
                  </Thumb>
                  <FrameSide>
                    <CloseButton $active={n === 1} aria-label="删除帧"><Icon name="cross" size={9} /></CloseButton>
                    <SideButton aria-label="菜单"><Icon name="menu" size={11} /></SideButton>
                    <SideButton aria-label="显示"><Icon name="eye" size={13} /></SideButton>
                  </FrameSide>
                  <FrameTools>
                    <button aria-label="播放"><Icon name="play" size={14} /></button>
                    <button aria-label="设置"><Icon name="cog" size={14} /></button>
                  </FrameTools>
                </FrameItem>
              ))}
            </FrameItems>
            <ScrollTrack>
              <ScrollArrow $size={5} $up />
              <ScrollThumb />
              <ScrollArrow $size={5} />
            </ScrollTrack>
          </FrameArea>
          <FrameFoot>
            {["edit", "noteStar", "convert", "toTop"].map((n) => (
              <FootButton key={n} aria-label={n}><Icon name={n} size={16} /></FootButton>
            ))}
          </FrameFoot>
        </Frames>

        <Main>
          <Ribbon>
            <NameInput aria-label="工程名称" defaultValue="新建Focusky" />
            {ribbonItems.map((item) => (
              <React.Fragment key={item.icon}>
                <RibbonButton $drop={!!item.drop}>
                  <svg width="26" height="26" viewBox="0 0 26 26" overflow="visible" aria-hidden="true">{ribbon[item.icon]}</svg>
                  <RibbonLabel>{item.label}{item.caret && <Caret />}</RibbonLabel>
                </RibbonButton>
                {item.drop && <DropButton aria-label={`${item.label}选项`}><Caret /></DropButton>}
              </React.Fragment>
            ))}
            <Search onSubmit={(e) => e.preventDefault()}>
              <SearchBox>
                <Icon name="search" size={17} />
                <SearchInput aria-label="搜索" />
                <Caret $size={5} />
              </SearchBox>
              <SearchButton>搜索</SearchButton>
            </Search>
          </Ribbon>

          <Workspace>
            <Editor>
              <EditBar>
                {barGroups.map((names, g) => (
                  <React.Fragment key={g}>
                    {g > 0 && <BarRule />}
                    {names.map((n) => (
                      <BarButton key={n} $off={n[0] === "-"} aria-label={n.replace("-", "")}>
                        <Icon name={n.replace("-", "")} size={16} />
                      </BarButton>
                    ))}
                  </React.Fragment>
                ))}
              </EditBar>
              <Canvas>
                <Scene />
                <FloatTools>
                  <FloatButton aria-label="取消组合"><Icon name="group" size={16} /></FloatButton>
                  <FloatButton aria-label="放大"><Icon name="circlePlus" size={16} /></FloatButton>
                  <FloatButton aria-label="删除"><Icon name="bin" size={16} /></FloatButton>
                </FloatTools>
              </Canvas>
              <PanelToggle aria-label="收起面板">
                <svg width="16" height="111" viewBox="0 0 16 111">
                  <path fill={c.panel} stroke={c.line} d="M16 0L.5 26v59L16 111z" />
                  <path fill="none" stroke="currentColor" strokeWidth="1.200" d="M3 47l8 8.500L3 64" />
                </svg>
              </PanelToggle>
            </Editor>

            <Strip>
              {stripIcons.map((n) => (
                <StripButton key={n} $active={n === "link"} aria-label={n}><Icon name={n} size={16} /></StripButton>
              ))}
            </Strip>

            <Panel>
              <PanelTitle>组合</PanelTitle>
              <SectionTitle>编辑</SectionTitle>
              <ToolGrid rows={editRows} />
              <SectionTitle>图层</SectionTitle>
              <ToolGrid rows={layerRows} />
            </Panel>
          </Workspace>
        </Main>
      </Body>

      <StatusBar>
        <StatusButton aria-label="放映"><Icon name="monitor" size={13} /></StatusButton>
        <StatusButton aria-label="解锁"><Icon name="openLock" size={14} /></StatusButton>
      </StatusBar>
      <TaskBar>
        {[184, 742, 928].map((x) => <TaskSlot key={x} $x={x} />)}
        {marks.map(([x, w, color]) => <TaskMark key={x} $x={x} $w={w} $color={color} />)}
        <TaskMark $x={199} $w={28} $color="#1e8fe6" />
        <TaskMark $x={755} $w={31} $color="#2186d6" />
        <Clock>下午 4:00</Clock>
        <ShowDesktop />
      </TaskBar>

      <Meter>
        <Speeds>
          <Speed>
            <svg width="8" height="8" viewBox="0 0 8 8"><path fill="#4db8ff" d="M4 0l4 4H5v4H3V4H0z" /></svg>
            114<Unit>K/s</Unit>
          </Speed>
          <Speed>
            <svg width="8" height="8" viewBox="0 0 8 8"><path fill="#2fae3f" d="M4 8L0 4h3V0h2v4h3z" /></svg>
            3<Unit>K/s</Unit>
          </Speed>
        </Speeds>
        <Dial>
          <svg width="58" height="58" viewBox="0 0 58 58">
            <defs>
              <linearGradient id="dial" x1="1" y1="0" x2="0.200" y2="1">
                <stop offset="0" stopColor="#4fd8dc" />
                <stop offset=".5" stopColor="#7fe3a0" />
                <stop offset="1" stopColor="#f2d04a" />
              </linearGradient>
            </defs>
            <path fill="none" stroke="url(#dial)" strokeWidth="1.500" d="M29 4a25 25 0 1 1-22 37" />
          </svg>
          67<small>%</small>
        </Dial>
      </Meter>
    </Shell>
  );
}
